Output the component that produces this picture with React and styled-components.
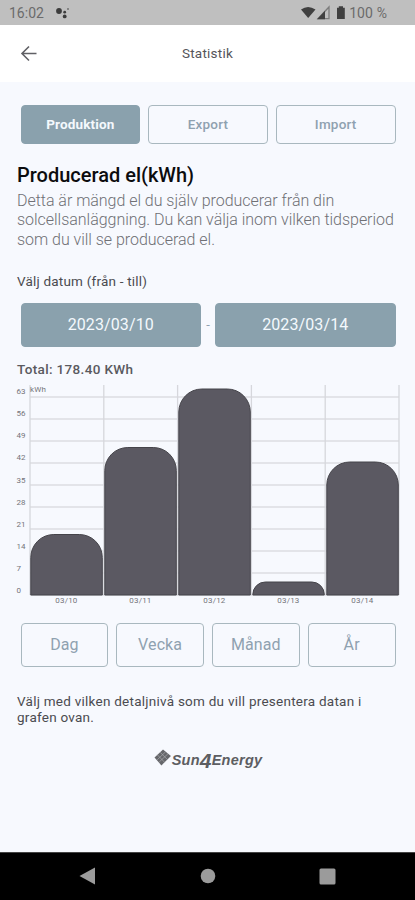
import React from "react"
import styled, { createGlobalStyle } from "styled-components"

const GlobalStyle = createGlobalStyle`
  body {
    margin: 0;
    background: #f7f9fe;
    font-family: Roboto, "Liberation Sans", sans-serif;
  }
`

const Screen = styled.div`
  display: flex;
  flex-direction: column;
  width: 415px;
  height: 900px;
  overflow: hidden;
`

const StatusBar = styled.div`
  display: flex;
  align-items: center;
  box-sizing: border-box;
  height: 25px;
  padding: 1px 28px 0 9px;
  background: #bfbfbf;
  color: #6b6b6b;
  font-size: 14px;
`

const Dots = styled.svg`
  margin-left: 12px;
`

const StatusIcons = styled.svg`
  margin-left: auto;
  margin-right: 3px;
`

const Percent = styled.span`
  letter-spacing: 0.1px;
`

const Header = styled.header`
  display: grid;
  grid-template-columns: 40px 1fr 40px;
  align-items: center;
  height: 57px;
  padding: 0 20px;
  background: #ffffff;
`

const HeaderTitle = styled.span`
  padding-bottom: 2px;
  text-align: center;
  color: #55555a;
  font-size: 13.5px;
  letter-spacing: 0.25px;
`

const Content = styled.main`
  display: flex;
  flex-direction: column;
  flex: 1;
  padding: 23px 16px 0 17px;
`

const ButtonRow = styled.div`
  display: flex;
  align-items: center;
  gap: ${props => props.$gap || 8}px;
  margin: 0 3.5px 0 3.5px;
`

const PeriodRow = styled(ButtonRow)`
  margin-top: 17px;
`

const Button = styled.button`
  flex: 1 1 0;
  box-sizing: border-box;
  height: ${props => props.$height || 44}px;
  padding: 0;
  border: 1px solid ${props => props.$filled ? "#8aa1ad" : "#a9b8bf"};
  border-radius: 4px;
  background: ${props => props.$filled ? "#8aa1ad" : "transparent"};
  color: ${props => props.$filled ? "#f4f9fd" : "#8fa1b0"};
  font-family: inherit;
  font-size: ${props => props.$size || 16}px;
  font-weight: ${props => props.$weight || 400};
  letter-spacing: ${props => props.$spacing || 0}px;
`

const TabButton = styled(Button)`
  padding-bottom: 1px;
`

const Title = styled.h1`
  margin: 19px 0 0;
  color: #0c0c0e;
  font-size: 20px;
  font-weight: 500;
  line-height: 25px;
  letter-spacing: 0;
`

const Description = styled.p`
  margin: 3px 0 0;
  color: #6f7075;
  font-size: 16px;
  font-weight: 300;
  line-height: 19.3px;
  letter-spacing: -0.03px;
  white-space: nowrap;
`

const Label = styled.div`
  margin: 24px 0 13px;
  color: #4b4b50;
  font-size: 13.5px;
  line-height: 17px;
  letter-spacing: 0.2px;
`

const Dash = styled.span`
  width: 4px;
  color: #8fa1b0;
  font-size: 13px;
  text-align: center;
`

const Total = styled.div`
  margin-top: 13px;
  color: #5a5a5f;
  font-size: 13.5px;
  font-weight: 500;
  line-height: 18px;
  letter-spacing: 0.35px;
`

const ChartSvg = styled.svg`
  display: block;
  margin: 7px 0 0 -1px;

  text {
    fill: #74747a;
    font-size: 8px;
  }
`

const Note = styled.p`
  margin: 26px 0 0;
  color: #4b4b50;
  font-size: 13.5px;
  line-height: 16px;
  letter-spacing: 0.25px;
  white-space: nowrap;
`

const Brand = styled.div`
  display: flex;
  align-items: center;
  align-self: center;
  height: 24px;
  margin: 24px 0 0;
  color: #5d5e62;
  font-family: "Liberation Sans", Arial, sans-serif;
  font-size: 14.5px;
  font-style: italic;
  font-weight: bold;
`

const BrandMark = styled.svg`
  margin: -5px 0 0;
`

const BrandFour = styled.span`
  font-size: 21px;
  line-height: 20px;
  vertical-align: -3px;
`

const BrandWord = styled.span`
  letter-spacing: 0.25px;
`

const NavBar = styled.nav`
  display: flex;
  align-items: center;
  justify-content: space-between;
  box-sizing: border-box;
  height: 48px;
  padding: 0 79px 1px;
  border-top: 1px solid #444444;
  background: #000000;
`

const days = [
  { date: "03/10", top: 149.5 },
  { date: "03/11", top: 62.5 },
  { date: "03/12", top: 4 },
  { date: "03/13", top: 197 },
  { date: "03/14", top: 77 },
]

const ticks = [63, 56, 49, 42, 35, 28, 21, 14, 7, 0]

const BASE = 210
const LEFT = 14
const STEP = 73.8
const BAR_WIDTH = 71.5

function barPath(x, top) {
  const right = x + BAR_WIDTH
  const r = Math.min(23, BASE - top - 0.5)
  return `M${x} ${BASE}V${top + r}A${r} ${r} 0 0 1 ${x + r} ${top}H${right - r}A${r} ${r} 0 0 1 ${right} ${top + r}V${BASE}Z`
}

function Chart() {
  return (
    <ChartSvg width="384" height="221" viewBox="0 0 384 221">
      {ticks.map((tick, i) => (
        <g key={tick}>
          <line x1={LEFT} x2="383" y1={12 + i * 22} y2={12 + i * 22} stroke="#dcdde2" strokeWidth="1.3" />
          <text x="0.5" y={9.3 + i * 22.05}>{tick}</text>
        </g>
      ))}
      {[0, 1, 2, 3, 4, 5].map(i => (
        <line key={i} x1={LEFT + i * STEP} x2={LEFT + i * STEP} y1="0" y2={BASE} stroke="#d6d7dc" strokeWidth="1.3" />
      ))}
      <text x="14" y="7.3" textLength="16">kWh</text>
      {days.map((day, i) => {
        const x = LEFT + 0.8 + i * 74
        return (
          <g key={day.date}>
            <path d={barPath(x, day.top)} fill="#5b5962" stroke="#45444a" strokeWidth="1" />
            <text x={x + 35.5} y="217.8" textAnchor="middle" textLength="22">{day.date}</text>
          </g>
        )
      })}
    </ChartSvg>
  )
}

function App() {
  return (
    <Screen>
      <GlobalStyle />
      <StatusBar>
        <span>16:02</span>
        <Dots width="16" height="14" viewBox="0 0 16 14">
          <g fill="#3c3c3c">
            <circle cx="3" cy="5" r="2.9" />
            <circle cx="8.7" cy="6.2" r="1.4" />
            <circle cx="8.7" cy="10.4" r="1.9" />
            <circle cx="12" cy="3" r="0.8" />
          </g>
        </Dots>
        <StatusIcons width="46" height="16" viewBox="0 0 46 16">
          <path d="M1 4.5Q8 -0.5 15.5 4.5L8.2 13Z" fill="#404040" />
          <path d="M18 13.7L29 2V13.7Z" fill="none" stroke="#7c7c7c" strokeWidth="1.3" />
          <path d="M17 14.2L25 5.7V14.2Z" fill="#404040" />
          <path d="M37 2.8H38.8V1.3H43V2.8H44.8V14H37Z" fill="#404040" />
        </StatusIcons>
        <Percent>100 %</Percent>
      </StatusBar>

      <Header>
        <svg width="18" height="18" viewBox="0 0 18 18" fill="none" stroke="#606065" strokeWidth="1.6">
          <path d="M16.5 8.5H2.2M9 1.5L2 8.5L9 15.5" />
        </svg>
        <HeaderTitle>Statistik</HeaderTitle>
      </Header>

      <Content>
        <ButtonRow>
          <TabButton $filled $height={39} $size={13.5} $weight={700} $spacing={0.15}>Produktion</TabButton>
          <TabButton $height={39} $size={13.5} $weight={500} $spacing={0.2}>Export</TabButton>
          <TabButton $height={39} $size={13.5} $weight={500} $spacing={0.2}>Import</TabButton>
        </ButtonRow>

        <Title>Producerad el(kWh)</Title>
        <Description>
          Detta är mängd el du själv producerar från din<br />
          solcellsanläggning. Du kan välja inom vilken tidsperiod<br />
          som du vill se producerad el.
        </Description>

        <Label>Välj datum (från - till)</Label>
        <ButtonRow $gap={5}>
          <Button $filled $spacing={0.1}>2023/03/10</Button>
          <Dash>-</Dash>
          <Button $filled $spacing={0.1}>2023/03/14</Button>
        </ButtonRow>

        <Total>Total: 178.40 KWh</Total>
        <Chart />

        <PeriodRow>
          <Button $spacing={0.1}>Dag</Button>
          <Button $spacing={0.1}>Vecka</Button>
          <Button $spacing={0.1}>Månad</Button>
          <Button $spacing={0.1}>År</Button>
        </PeriodRow>

        <Note>
          Välj med vilken detaljnivå som du vill presentera datan i<br />
          grafen ovan.
        </Note>

        <Brand>
          <BrandMark width="18" height="18" viewBox="0 0 17 17">
            <path d="M0.5 8L8.5 0.5L16 6.5L7 15.5Z" fill="#66676b" />
            <path d="M3 10.2L11 2.6M5 12.2L13.2 4.5M3.2 5.5L10 12.5M5.8 3.1L12.6 9.9" stroke="#b0b1b5" strokeWidth="0.6" />
          </BrandMark>
          <BrandWord>Sun<BrandFour>4</BrandFour>Energy</BrandWord>
        </Brand>
      </Content>

      <NavBar>
        <svg width="17" height="18" viewBox="0 0 17 18"><path d="M0.5 9L16 0.5V17.5Z" fill="#9b9b9b" /></svg>
        <svg width="16" height="16" viewBox="0 0 16 16"><circle cx="8" cy="8" r="7.3" fill="#9b9b9b" /></svg>
        <svg width="17" height="17" viewBox="0 0 17 17"><rect x="0.5" y="0.5" width="16" height="16" rx="1.5" fill="#9b9b9b" /></svg>
      </NavBar>
    </Screen>
  )
}

export default App
